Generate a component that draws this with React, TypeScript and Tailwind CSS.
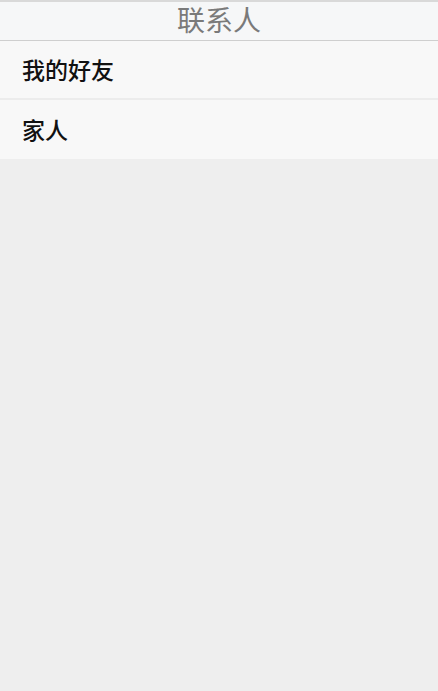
import React from 'react';

const groups = ['我的好友', '家人'];

const App: React.FC = () => {
  return (
    <div
      className="min-h-[691px] bg-[#eeeeee] flex flex-col"
      style={{ fontFamily: '"Noto Sans CJK SC", "Noto Sans", sans-serif' }}
    >
      <div className="h-[41px] bg-[#f6f7f8] border-t-[2px] border-t-[#d9d9d9] border-b border-b-[#cfcfcf] flex items-center justify-center">
        <h1 className="text-[28px] leading-none text-[#7a7a7a] -mt-[4px]">联系人</h1>
      </div>
      <div className="flex flex-col">
        {groups.map((name, i) => (
          <div
            key={name}
            className={`h-[59px] bg-[#f8f8f8] flex items-center pl-[22px] ${i === 0 ? 'border-b-[2px] border-b-[#ececec]' : ''}`}
          >
            <span className="text-[23px] leading-none font-medium text-[#111111] -mt-[1px]">{name}</span>
          </div>
        ))}
      </div>
    </div>
  );
};

export default App;
